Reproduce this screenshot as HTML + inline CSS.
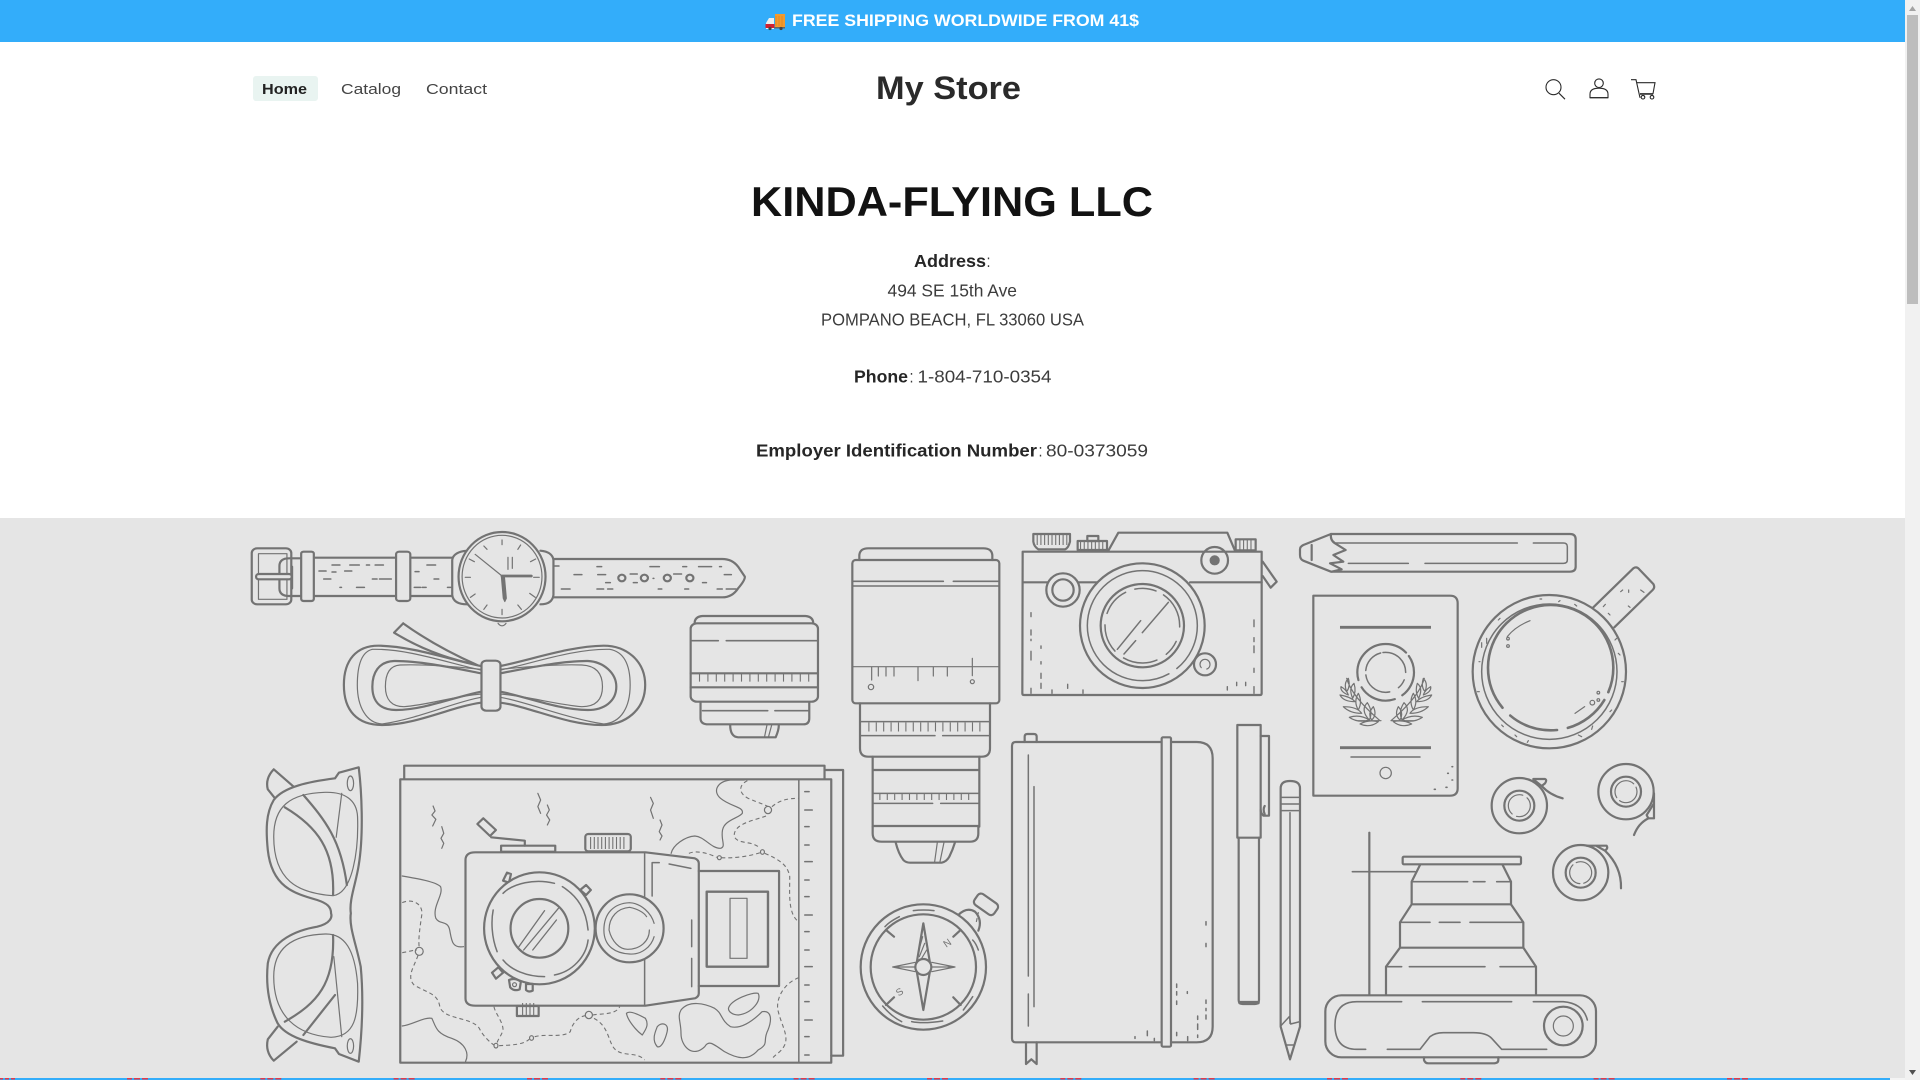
<!DOCTYPE html>
<html lang="en"><head><meta charset="utf-8"><title>My Store</title>
<style>
html,body{margin:0;padding:0;background:#fff;overflow:hidden}
svg{display:block;position:absolute;left:0;top:0}
text{font-family:"Liberation Sans",sans-serif}
.a *{vector-effect:non-scaling-stroke;fill:none;stroke:#737373;stroke-width:2.2px;stroke-linecap:round;stroke-linejoin:round}
.a .t,.a .t *{stroke-width:1.2px}
.a .f{fill:#e5e5e5}
.a .s{fill:#737373}
.a .k{stroke-width:8px;stroke-linecap:butt;stroke-dasharray:1.2 6.3}
.a .d{stroke-dasharray:4 3;stroke-width:1.1px;stroke-linecap:butt}
.a text{fill:#737373;stroke:none;font-size:30px}
.i *{fill:none;stroke:#2a2a2a;stroke-width:1.1;vector-effect:none}
</style></head><body>
<svg width="1920" height="1080" viewBox="0 0 1920 1080" xmlns="http://www.w3.org/2000/svg">
<rect width="1920" height="1080" fill="#fff"/>
<rect width="1905" height="42" fill="#33adfa"/>
<!-- truck -->
<g>
<rect x="775" y="14" width="10" height="13" fill="#f29a2e"/>
<path d="M776 16v10M779 16v10M782 16v10" stroke="#d97f1a" stroke-width=".6"/>
<path d="M766 27v-4l3-5h5v11h-8z" fill="#eee"/>
<rect x="765.500" y="24" width="9" height="4" fill="#d3202f"/>
<rect x="774" y="27" width="11" height="1.500" fill="#666"/>
<circle cx="770" cy="28.500" r="1.600" fill="#444"/><circle cx="781" cy="28.500" r="1.600" fill="#444"/>
</g>
<text x="792" y="26" font-size="17" font-weight="700" fill="#fff" textLength="347" lengthAdjust="spacingAndGlyphs">FREE SHIPPING WORLDWIDE FROM 41$</text>

<rect x="253" y="76" width="65" height="25" rx="3" fill="#e9f4f1"/>
<text x="262" y="94" font-size="15" font-weight="700" fill="#222" textLength="45" lengthAdjust="spacingAndGlyphs">Home</text>
<text x="341" y="94" font-size="15" fill="#444" textLength="60" lengthAdjust="spacingAndGlyphs">Catalog</text>
<text x="426" y="94" font-size="15" fill="#444" textLength="61" lengthAdjust="spacingAndGlyphs">Contact</text>
<text x="876" y="99" font-size="32" font-weight="700" fill="#2a2a2a" textLength="145" lengthAdjust="spacingAndGlyphs">My Store</text>

<g class="i" transform="translate(0 -.8)">
<circle cx="1553.500" cy="88" r="7.500"/><path d="M1559 94l6 6"/>
<circle cx="1599" cy="84" r="4.300"/><path d="M1590 98.500v-3.500q0-6 9-6t9 6v3.500z"/><path d="M1590 98.500h18" stroke-width="2"/>
<path d="M1631 80.500h5l4 18M1637 83.500h18l-2 11h-13M1640 95h13"/><circle cx="1643" cy="98" r="1.800"/><circle cx="1652" cy="98" r="1.800"/>
</g>

<text x="751" y="216" font-size="42" font-weight="700" fill="#121212" textLength="402" lengthAdjust="spacingAndGlyphs">KINDA-FLYING LLC</text>
<g font-size="17.500" fill="#3c3c3c">
<text x="914" y="267" font-weight="700" fill="#262626" textLength="72" lengthAdjust="spacingAndGlyphs">Address</text>
<text x="986.500" y="267" textLength="4" lengthAdjust="spacingAndGlyphs">:</text>
<text x="887.500" y="296.500" textLength="129.500" lengthAdjust="spacingAndGlyphs">494 SE 15th Ave</text>
<text x="821" y="325.500" textLength="263" lengthAdjust="spacingAndGlyphs">POMPANO BEACH, FL 33060 USA</text>
<text x="854" y="382.500" font-weight="700" fill="#262626" textLength="54" lengthAdjust="spacingAndGlyphs">Phone</text>
<text x="909.500" y="382.500" textLength="4" lengthAdjust="spacingAndGlyphs">:</text>
<text x="917.500" y="382.500" textLength="134" lengthAdjust="spacingAndGlyphs">1-804-710-0354</text>
<text x="756" y="456.500" font-weight="700" fill="#262626" textLength="281" lengthAdjust="spacingAndGlyphs">Employer Identification Number</text>
<text x="1038.500" y="456.500" textLength="4" lengthAdjust="spacingAndGlyphs">:</text>
<text x="1046" y="456.500" textLength="102" lengthAdjust="spacingAndGlyphs">80-0373059</text>
</g>

<rect x="0" y="518" width="1905" height="560" fill="#e5e5e5"/>

<g class="a">
<!-- Z3 watch, cable, lens -->
<g transform="translate(230 510) scale(.39541 .33333)">
<rect x="55" y="115" width="100" height="168" rx="14"/>
<rect class="t" x="72" y="131" width="72" height="137"/>
<path d="M180 145H150Q125 145 125 168V235Q125 258 150 258H180"/>
<path d="M157 170V235"/>
<rect class="f" x="66" y="192" width="90" height="16" rx="7"/>
<path d="M212 143H420M212 258H420M456 143H565M456 258H565"/>
<rect class="f" x="180" y="125" width="32" height="148" rx="6"/>
<rect class="f" x="420" y="125" width="36" height="148" rx="8"/>
<g class="t"><path d="M258 165H278M303 165H327M345 165H353M367 165H388M225 183H243M258 186H268M290 183H308M237 207H255M360 207H372M378 207H408M278 232H282M320 232H340M468 185H478M498 165H520M516 207H528M466 232H482M486 232H496M550 232H562M820 168H832M928 170H940M1062 170H1086M1145 170H1155M1185 170H1218M1238 170H1243M870 194H890M930 194H950M1012 192H1030M1070 205H1072M1122 192H1142M1020 218H1030M1195 218H1205M1250 194H1268M950 218H962M838 237H860M928 237H945M955 237H968M1083 237H1092M1150 237H1160M1232 237H1245M1255 237H1280" style="stroke-width:1.500px"/></g>
<path class="f" d="M600 122Q565 125 562 150V255Q565 283 600 283M785 122Q815 125 818 150V255Q815 283 785 283"/>
<path d="M818 147H1245Q1270 147 1285 170L1302 200Q1303 210 1285 235Q1270 262 1245 262H818"/>
<ellipse cx="991" cy="204" rx="9" ry="10"/><ellipse cx="1048" cy="204" rx="9" ry="10"/><ellipse cx="1106" cy="204" rx="9" ry="10"/><ellipse cx="1163" cy="204" rx="9" ry="10"/>
<ellipse class="f" cx="688" cy="200" rx="110" ry="134"/>
<ellipse class="t" cx="688" cy="200" rx="101" ry="124"/>
<path class="t" d="M678 340Q688 355 698 340"/>
<g class="t"><path d="M688 90V104M688 298V314M595 202H608M768 202H782M642 108L650 118M735 105L728 118M605 147L618 155M760 155L773 147M608 262L620 252M758 250L772 262M642 298L650 285M728 285L737 298M620 133L688 198"/><path d="M703 142V178M714 142V175"/></g>
<path d="M688 198H762" style="stroke-width:2.800px"/>
<path class="s" d="M686 198H694L699 265L695 275L691 265Z" style="stroke-width:1px"/>
<path d="M635 468C560 450 460 408 375 407C320 407 288 450 288 525C288 600 320 645 385 645C470 645 560 590 635 578"/>
<path d="M684 468C760 450 860 408 945 407C1000 407 1050 450 1050 525C1050 600 1000 645 940 645C850 645 760 590 684 578"/>
<path d="M635 490C570 475 480 452 415 453C375 455 360 490 360 530C360 575 380 600 420 600C490 600 570 560 635 545"/>
<path d="M684 490C750 475 840 452 905 453C945 455 977 490 977 530C977 575 945 600 905 600C830 600 750 560 684 545"/>
<g class="t"><path d="M635 480C560 462 450 415 360 418C335 425 322 460 322 525C322 590 345 640 385 642M635 562C570 575 480 625 385 642"/><path d="M684 480C760 462 870 415 960 418C995 425 1012 460 1012 525C1012 590 990 638 945 642M684 562C750 575 850 625 945 642"/><path d="M635 478C570 470 490 462 430 465C405 467 393 490 393 530C393 570 410 590 440 590C500 585 570 558 635 552M684 478C750 470 830 462 890 465C925 467 942 490 942 530C942 570 925 590 890 590C830 585 750 558 684 552"/></g>
<path d="M438 340L415 368Q500 430 600 458M438 340Q520 410 625 465"/>
<rect class="f" x="636" y="452" width="48" height="150" rx="12"/>
<path d="M1175 340Q1175 320 1195 318H1455Q1475 320 1475 340"/>
<rect x="1165" y="340" width="322" height="235" rx="16"/>
<path class="t" d="M1168 392H1235M1255 392H1485" style="stroke-width:1.600px"/>
<path d="M1165 490H1487M1165 532H1487"/>
<line class="k t" x1="1186" y1="503" x2="1470" y2="503" style="stroke-width:8px;stroke-dasharray:1.100 7.300;stroke-linecap:butt"/>
<path d="M1190 578V625Q1190 643 1210 643H1450Q1465 643 1465 625V578"/>
<path class="t" d="M1195 602H1360M1378 602H1465" style="stroke-width:1.600px"/>
<path d="M1265 645Q1265 680 1285 682H1380Q1388 660 1388 645"/>
<path class="t" d="M1358 645L1352 680M1370 645L1362 680"/>
</g>

<!-- Z4 long lens + camera -->
<g transform="translate(830 510) scale(.33333)">
<path d="M88 150V135Q90 115 115 115H460Q485 115 487 135V150"/>
<rect x="67" y="150" width="441" height="430" rx="10"/>
<path class="t" d="M70 214H340M370 214H505M70 228H505" style="stroke-width:1.600px"/>
<path class="t" d="M70 470H505M125 470V510M145 470V498M168 470V498M192 470V498M264 470V512M310 470V498M352 470V498M427 445V497"/>
<g class="t"><circle cx="123" cy="531" r="8"/><circle cx="427" cy="515" r="6"/></g>
<path d="M90 580V715Q90 740 115 740H455Q480 740 480 715V580"/>
<path class="t" d="M90 635H480M90 677H315M338 677H480" style="stroke-width:1.500px"/>
<line class="k" x1="115" y1="651" x2="465" y2="651" style="stroke-width:9px;stroke-dasharray:1.100 6.300"/>
<path d="M128 740V950M448 740V950M128 780H448M128 948H448"/>
<path class="t" d="M130 850H445M130 880H308M332 880H445" style="stroke-width:1.500px"/>
<line class="k" x1="148" y1="861" x2="430" y2="861" style="stroke-width:6px;stroke-dasharray:1.100 6.300"/>
<path d="M128 950V970Q128 995 155 995H420Q445 995 445 970V950"/>
<path d="M197 997Q205 1030 220 1050Q228 1058 240 1058H335Q350 1055 358 1040Q368 1020 375 997"/>
<path class="t" d="M322 997L314 1055M342 997L330 1055"/>

<path d="M578 125H1295V550Q1295 555 1290 555H582Q577 555 577 550Z"/>
<path d="M835 122L865 68H1192L1215 122"/>
<path d="M610 72H720V95Q715 115 705 118H625Q612 110 610 95Z"/>
<line class="k" x1="620" y1="90" x2="712" y2="90" style="stroke-width:10px;stroke-dasharray:1.100 2.600"/>
<rect x="743" y="93" width="88" height="27"/><rect x="772" y="78" width="33" height="15"/>
<line class="k" x1="750" y1="108" x2="825" y2="108" style="stroke-width:10px;stroke-dasharray:1.100 2.600"/>
<rect x="1217" y="88" width="60" height="33"/>
<line class="k" x1="1228" y1="106" x2="1265" y2="106" style="stroke-width:12px;stroke-dasharray:1.100 2.600"/>
<path d="M578 217H660M740 217H810M1080 217H1295"/>
<circle cx="1154" cy="151" r="40"/><circle class="s" cx="1154" cy="151" r="12"/>
<circle class="f" cx="699" cy="240" r="50"/><circle cx="699" cy="240" r="32"/>
<circle class="f" cx="937" cy="347" r="187"/>
<circle class="t" cx="937" cy="347" r="165" style="stroke-width:1.500px;stroke-dasharray:49 9.600 287"/>
<circle cx="937" cy="347" r="125"/>
<circle class="t" cx="937" cy="347" r="112" style="stroke-width:1.500px;stroke-dasharray:1.300 15 16.300 11 34.600 11 28.700 11.700 28.700 9.800 21.500 8.500 36.500 0"/>
<path class="t" style="stroke-width:1.500px" d="M862 418L932 332M882 432L917 392M937 368L1015 277"/>
<circle class="f" cx="1125" cy="463" r="33"/>
<circle class="t" cx="1125" cy="463" r="15" style="stroke-dasharray:6 6 20 0"/>
<path d="M1298 155L1340 215L1322 233L1298 198"/>
<path class="t" style="stroke-width:1.400px" d="M603 308V320M603 360V375M603 388V392M603 424V450M633 408V415M633 455V462M633 490V505M633 520V535M603 535V550M666 540V550M713 523V535M759 540V550M1192 530V540M1220 517V527M1247 517V527M1272 530V550M1272 330V350M1272 383V395M1272 408V428M1272 475V487"/>
</g>

<!-- Z5 pen, passport, cup -->
<g transform="translate(1280 510) scale(.33333)">
<path d="M70 105L153 72H870Q887 72 887 88V170Q887 185 870 185H153L70 152Q60 148 60 135V118Q60 110 70 105Z"/>
<path d="M95 105V150"/>
<path d="M153 72Q150 90 165 100L197 120L160 135L190 155L150 160L185 178L155 185"/>
<path class="t" style="stroke-width:1.500px" d="M165 99H712M760 99H850Q862 99 862 110V150Q862 160 850 160H435M205 160H385"/>
<path d="M100 257H510Q533 257 533 280V835Q533 857 510 857H100Z"/>
<path d="M180 352H453M180 713H453" style="stroke-width:2.800px;stroke-linecap:butt"/>
<path class="t" d="M213 741H420" style="stroke-width:1.500px"/>
<circle class="t" cx="317" cy="789" r="17"/>
<circle cx="317" cy="487" r="85" style="stroke-dasharray:26.700 8.400 38 7.900 75 4.400 17.300 0"/>
<circle class="t" cx="317" cy="487" r="60" style="stroke-width:1.500px;stroke-dasharray:0 7.700 9.800 9.800 32.800 4.500 24.400 2.400 34.200 0"/>
<g class="t" style="stroke-width:1.400px">
<path d="M200 505Q215 560 300 632M303 632H232M205 505Q190 520 200 545Q212 530 205 505ZM183 530Q180 545 205 555Q200 540 183 530ZM222 520Q205 535 218 565Q230 545 222 520ZM180 555Q190 575 225 575Q212 560 180 555ZM235 550Q220 575 235 600Q248 575 235 550ZM190 590Q210 610 245 610Q232 590 190 590ZM262 578Q240 600 268 630Q280 605 262 578ZM208 622Q235 640 268 630Q240 612 208 622ZM280 590Q262 610 275 630Q292 615 280 590ZM240 642Q270 655 295 635Q265 628 240 642Z"/>
<path d="M433 505Q418 560 333 632M333 632H401M430 505Q445 520 435 545Q422 530 430 505ZM452 530Q455 545 430 555Q435 540 452 530ZM412 520Q430 535 416 565Q404 545 412 520ZM455 555Q445 575 410 575Q422 560 455 555ZM400 550Q415 575 400 600Q386 575 400 550ZM445 590Q425 610 390 610Q402 590 445 590ZM372 578Q395 600 366 630Q354 605 372 578ZM427 622Q400 640 366 630Q395 612 427 622ZM355 590Q372 610 360 630Q342 615 355 590ZM395 642Q365 655 340 635Q370 628 395 642Z"/>
</g>
<circle cx="808" cy="485" r="230"/>
<circle class="t" cx="808" cy="485" r="203" style="stroke-width:1.500px"/>
<circle cx="812" cy="473" r="188" style="stroke-width:2.600px;stroke-dasharray:25.200 8.800 47 11 50.300 11 240.700 0"/>
<path d="M940 292L1060 175Q1070 168 1078 178L1120 222Q1126 232 1118 240L1003 352"/>
<g class="t" style="stroke-width:1.300px"><path d="M682 380Q705 350 750 332M885 610L914 590M1022 245L1028 240M1046 240V247M1082 240L1092 247M970 290L976 283M1045 288L1050 292M985 310L990 315M780 267H785M840 272L836 275M884 283L890 288M600 455H597M620 385V400M605 398V412M660 325L655 330M1005 390L1010 385M1015 430L1020 435M1030 515H1025M592 545H598M670 650L665 645M705 675L710 680M745 692L742 697M895 675L905 680M938 648L935 658M995 600L990 605"/>
<circle cx="684" cy="386" r="4"/><circle cx="684" cy="408" r="4"/><circle cx="937" cy="578" r="7"/><circle cx="955" cy="570" r="4"/><circle cx="955" cy="548" r="4"/></g>
<path class="t" style="stroke-width:1.600px" d="M516 770H518M503 790H505M516 810H518M463 838H466M498 832H501"/>
</g>

<!-- Z6 glasses, map -->
<g transform="translate(250 750) scale(.39541 .33333)">
<path d="M70 155L45 118Q38 85 60 58L118 118"/>
<path d="M70 830L45 868Q38 905 60 932L118 875"/>
<path class="f" d="M225 68L275 52C282 120 288 250 275 345C268 400 250 450 255 490C250 530 268 580 280 650C288 750 282 860 275 935L225 912L215 895C150 880 90 860 70 820C45 760 40 700 45 640C55 570 120 540 170 530C205 520 208 500 205 490C205 470 195 460 170 450C110 430 55 410 45 300C40 240 40 190 60 150C85 110 150 95 215 85Z"/>
<g class="t" style="stroke-width:1.400px"><path d="M60 260C60 170 100 130 190 127C240 125 270 150 272 200C275 300 260 430 210 437C120 430 60 390 60 260Z"/>
<path d="M60 680C60 600 100 555 190 552C240 550 265 600 272 700C275 800 265 860 205 862C120 855 60 800 60 680Z"/>
<path d="M232 130L218 262M232 860L212 620"/></g>
<path d="M135 135C190 210 230 270 245 405M88 172C170 230 215 300 210 435M88 815C170 760 215 700 210 555M135 855L215 735"/>
<g class="t" style="stroke-width:1.500px"><ellipse cx="254" cy="100" rx="8" ry="22"/><ellipse cx="254" cy="888" rx="8" ry="22"/></g>

<path d="M390 85V47H1453V85"/>
<path d="M1455 60H1500V917H1470"/>
<rect x="380" y="88" width="1090" height="850"/>
<path class="t" d="M1388 88V938" style="stroke-width:1.500px"/>
<path class="t" style="stroke-width:1.500px" d="M1403 125H1414M1403 180H1422M1403 230H1414M1403 285H1414M1403 335H1422M1403 390H1414M1403 440H1414M1403 495H1422M1403 545H1414M1403 600H1414M1403 650H1422M1403 705H1414M1403 755H1414M1403 810H1422M1403 860H1414M1403 915H1414"/>
<g class="t" style="stroke-width:1.200px">
<path d="M1250 90H1215C1180 95 1170 125 1190 145C1215 170 1250 170 1245 190C1235 205 1200 210 1195 240C1190 270 1205 290 1190 295C1165 295 1150 260 1125 258C1100 260 1070 285 1065 310"/>
<path d="M385 378C420 385 470 395 482 410C490 435 460 470 470 505C480 525 500 510 505 540C510 570 510 595 540 590"/>
<path d="M385 828C410 825 440 800 460 805C470 830 470 850 510 865C545 880 555 910 545 935"/>
<path d="M952 790C960 780 985 795 1000 805C1010 825 1000 840 992 855C975 840 955 810 952 790Z"/>
<path d="M1030 830C1040 815 1060 820 1055 845C1050 870 1040 895 1030 890C1015 870 1025 845 1030 830Z"/>
<path d="M1090 780C1110 750 1150 760 1175 775C1195 790 1190 810 1215 830C1240 838 1270 815 1295 785C1320 780 1320 810 1310 840C1295 875 1315 880 1285 900C1260 935 1230 925 1200 905C1170 880 1160 870 1150 890C1120 925 1090 890 1090 850C1090 815 1080 800 1090 780Z"/>
<path d="M1210 775C1215 750 1270 725 1285 730C1295 750 1270 790 1235 795C1220 795 1210 785 1210 775Z"/>
<ellipse cx="1310" cy="180" rx="9" ry="11"/><ellipse cx="1187" cy="323" rx="5" ry="6"/><ellipse cx="1296" cy="306" rx="5" ry="7"/><ellipse cx="428" cy="604" rx="10" ry="12"/><ellipse cx="622" cy="887" rx="5" ry="7"/><ellipse cx="712" cy="864" rx="5" ry="7"/><ellipse cx="857" cy="795" rx="9" ry="11"/>
<path d="M463 168L468 183L460 195L470 208L462 228M485 230L490 250L483 265L490 280L485 295M728 130L735 150L728 170L735 190M752 165L757 180L750 195L758 210L752 225M1013 142L1020 160L1013 180L1020 205M1037 210L1042 225L1035 245L1042 258L1037 270"/>
</g>
<g class="d">
<path class="d" d="M1258 92C1235 105 1235 130 1260 145C1285 158 1305 165 1310 170M1320 170C1340 150 1360 145 1388 145M1305 198C1280 210 1220 220 1225 260C1235 285 1270 270 1290 295M1110 310C1130 300 1160 310 1180 322M1192 323C1220 325 1260 320 1290 308M1302 310C1340 330 1360 345 1365 380C1365 430 1360 490 1387 515M1388 683C1350 700 1330 745 1335 780C1345 830 1365 860 1350 890C1340 910 1325 915 1320 928M385 458C410 445 435 460 435 490C430 530 425 570 428 592M385 608C400 605 415 600 422 600M425 616C415 650 395 680 415 705C450 730 475 730 480 770C490 810 560 800 580 835C590 860 610 880 617 885M630 887C660 885 690 885 706 868M720 860C750 850 790 865 810 845C815 820 830 800 848 797M867 795C890 790 925 795 935 770M870 805C910 830 905 880 925 900C945 920 980 905 998 930M617 770C620 790 640 815 640 840C635 860 625 870 625 880"/>
</g>
<path class="f" d="M570 307H1000L1125 325Q1135 330 1135 340V730Q1135 740 1125 745L1000 767H570Q545 767 545 745V330Q545 307 570 307Z"/>
<path class="t" d="M998 307V767" style="stroke-width:1.500px"/>
<path d="M1135 363H1338V708H1135"/>
<rect x="1155" y="425" width="155" height="225" style="stroke-width:2.400px"/>
<rect class="t" x="1214" y="445" width="43" height="180"/>
<rect x="848" y="252" width="115" height="52" rx="8"/>
<line class="k" x1="860" y1="279" x2="950" y2="279" style="stroke-width:12px;stroke-dasharray:1.100 2.600"/>
<rect x="635" y="287" width="137" height="18"/>
<path d="M610 262L695 272V287"/>
<path d="M575 222L590 205L622 240L607 258Z"/>
<path class="f" d="M650 368L660 372L655 398L640 392ZM850 405L862 420L850 435L835 420ZM612 668L628 652L640 668L622 686Z"/>
<ellipse class="f" cx="732" cy="535" rx="140" ry="168"/>
<path class="t" d="M640 430C665 400 720 385 770 400M790 410C830 440 850 480 855 540M855 570C850 620 815 665 770 675M745 680C700 680 660 660 640 630M625 605C610 560 610 510 615 480" style="stroke-width:1.500px"/>
<ellipse cx="732" cy="535" rx="73" ry="88"/>
<path class="t" d="M680 590L745 482M692 600L780 475M715 600L775 510" style="stroke-width:1.300px"/>
<path d="M655 690Q670 682 685 695L682 718Q668 725 658 712Z"/><ellipse class="t" cx="669" cy="704" rx="5" ry="6"/>
<path d="M698 702L715 702L715 722Q705 728 698 720Z"/>
<ellipse class="f" cx="960" cy="535" rx="86" ry="102"/>
<g class="t" style="stroke-width:1.500px"><path d="M895 540C895 490 920 460 960 458C990 460 1015 490 1022 520M1022 560C1015 590 990 615 960 612C925 610 895 590 895 540"/>
<path d="M908 540C908 500 930 475 960 472C975 475 995 485 1003 500M1010 540C1010 575 985 598 955 598C935 598 915 575 908 540"/></g>
<rect x="675" y="768" width="55" height="30"/>
<line class="k" x1="688" y1="777" x2="720" y2="777" style="stroke-width:12px;stroke-dasharray:1.100 2.600"/>
<path class="t" d="M1017 438V338H1035M1060 342L1115 355M1117 510V590M1117 625V710" style="stroke-width:1.500px"/>
</g>

<!-- Z7 notebook, pen, pencil, compass -->
<g transform="translate(850 720) scale(.33333)">
<path d="M497 66H1040Q1088 66 1088 115V920Q1088 967 1040 967H497Q486 967 486 955V78Q486 66 497 66Z"/>
<rect class="f" x="935" y="52" width="28" height="928" rx="4"/>
<path d="M524 66V50Q524 42 532 42H552Q560 42 560 50V66"/>
<path d="M528 967V1032L544 1018L560 1032V967"/>
<path class="t" d="M535 105V768M535 822V918M552 200V860" style="stroke-width:1.500px"/>
<path class="t" style="stroke-width:1.500px" d="M1068 605V615M1068 670V680M980 792V802M980 815V825M980 843V853M1012 815V820M1068 840V850M1068 865V872M1068 885V897M1043 888V898M1043 912V928M1043 945V952M980 937V947M1013 950V962M892 933V947M913 955V962M855 950V955"/>
<path d="M1232 48H1257V287H1240Q1232 278 1232 270M1244 258Q1238 268 1244 282"/>
<rect x="1162" y="15" width="70" height="338" style="stroke-linecap:butt"/>
<path d="M1166 353V840Q1166 852 1178 852H1215Q1227 852 1227 840V353"/>
<path d="M1170 848H1224" style="stroke-width:3.500px"/>
<path d="M1292 920V205Q1292 183 1320 183Q1350 183 1350 205V920L1320 1018Z"/>
<path class="t" d="M1292 232H1350M1292 252H1350M1292 272H1350M1320 278V910M1308 975H1332" style="stroke-width:1.500px"/>
<path class="t" d="M1292 918L1318 890L1322 912L1350 905" style="stroke-width:1.500px"/>

<path d="M325 585Q350 560 375 575Q398 600 385 632"/>
<path class="t" d="M385 578L378 610" style="stroke-dasharray:3 3"/>
<rect class="f" x="372" y="533" width="72" height="40" rx="12" transform="rotate(35 408 553)"/>
<circle class="f" cx="220" cy="741" r="188"/>
<circle cx="220" cy="741" r="158"/>
<path class="t" style="stroke-width:1.500px" d="M190 572Q220 568 252 572M105 620Q118 605 148 590M368 660Q378 670 385 690M98 858Q125 890 155 905M185 905Q220 912 278 903M368 830Q355 850 340 870"/>
<path d="M108 630L132 650M332 630L310 650M108 855L132 832M332 855L310 832"/>
<path d="M220 610L242 741L220 870L198 741Z"/>
<path class="t" d="M128 741L196 727M128 741L196 755M128 741H196M315 741L245 727M315 741L245 755M315 741H245"/>
<path class="t" d="M208 710L224 670M212 720L230 690M205 695L218 650"/>
<circle class="f" cx="220" cy="741" r="24"/>
<text x="280" y="680" font-size="30" transform="rotate(-35 290 668)" font-family="Liberation Sans">N</text>
<text x="138" y="826" font-size="30" transform="rotate(-35 148 815)" font-family="Liberation Sans">S</text>
</g>

<!-- Z8 lens stack, tapes -->
<g transform="translate(1300 760) scale(.33333)">
<rect x="308" y="290" width="355" height="23" rx="4"/>
<path d="M360 315L335 365V433H633V365L608 315M335 433L300 487V563H670V487L633 433M300 563L258 620V705M670 563L708 620V705"/>
<path class="t" style="stroke-width:1.600px" d="M335 365H503M520 365H555M590 365H630M300 487H390M418 487H480M510 487H668M258 620H305M328 620H555M600 620H708M157 335H345"/>
<path d="M208 218V705"/>
<rect class="f" x="76" y="706" width="812" height="186" rx="48"/>
<path class="t" style="stroke-width:1.600px" d="M305 725H170Q105 725 105 795Q105 868 170 868H197M262 868H360L390 830Q405 818 430 818H520Q560 818 575 835L605 868H740M367 725H635M700 725H790Q850 730 862 780"/>
<circle cx="790" cy="798" r="58"/><circle class="t" cx="790" cy="798" r="30"/>
<path d="M372 892V900Q375 910 385 910H580Q595 910 595 900V892"/>

<circle cx="658" cy="137" r="83"/><circle cx="658" cy="137" r="45"/>
<circle class="t" cx="658" cy="137" r="33" style="stroke-dasharray:20 5 30 5 9"/>
<path d="M700 57H735Q742 60 735 70L725 78Q750 105 788 115M700 58L725 78"/>
<circle cx="978" cy="95" r="83"/><circle cx="978" cy="95" r="45"/>
<circle class="t" cx="978" cy="95" r="33" style="stroke-dasharray:24 4 32 4 5"/>
<path d="M1062 100V175H1045Q1015 190 1002 225M1062 130L1040 165L1045 175"/>
<circle cx="842" cy="338" r="83"/><circle cx="842" cy="338" r="45"/>
<circle class="t" cx="842" cy="338" r="33" style="stroke-dasharray:14 4 25 4 22"/>
<path d="M860 257H920Q925 265 915 272Q965 320 963 385M890 258L915 272"/>
</g>
</g>

<!-- bottom strip -->
<rect x="0" y="1078" width="1890" height="2" fill="#33adfa"/>
<rect x="1890" y="1078" width="15" height="2" fill="#f4f4f4"/>
<g fill="#e23a4a">
<rect x="0" y="1078" width="3" height="1.500"/><rect x="5" y="1078" width="4" height="1.500"/><rect x="11" y="1078" width="4" height="1.500"/>
<g id="r"><rect x="127" y="1078" width="5" height="1.500"/><rect x="134" y="1078" width="6" height="1.500"/><rect x="142" y="1078" width="6" height="1.500"/></g>
<use href="#r" x="133.300"/><use href="#r" x="266.600"/><use href="#r" x="400"/><use href="#r" x="533.300"/><use href="#r" x="666.600"/><use href="#r" x="800"/><use href="#r" x="933.300"/><use href="#r" x="1066.600"/><use href="#r" x="1200"/><use href="#r" x="1333.300"/><use href="#r" x="1466.600"/><use href="#r" x="1600"/>
</g>

<!-- scrollbar -->
<rect x="1905" y="0" width="15" height="1080" fill="#f1f1f1"/>
<path d="M1912.500 6L1916 11H1909Z" fill="#a3a3a3"/>
<rect x="1907" y="15" width="11" height="289" fill="#bdbdbd"/>
<path d="M1909 1070H1916L1912.500 1075Z" fill="#505050"/>
</svg>
</body></html>
